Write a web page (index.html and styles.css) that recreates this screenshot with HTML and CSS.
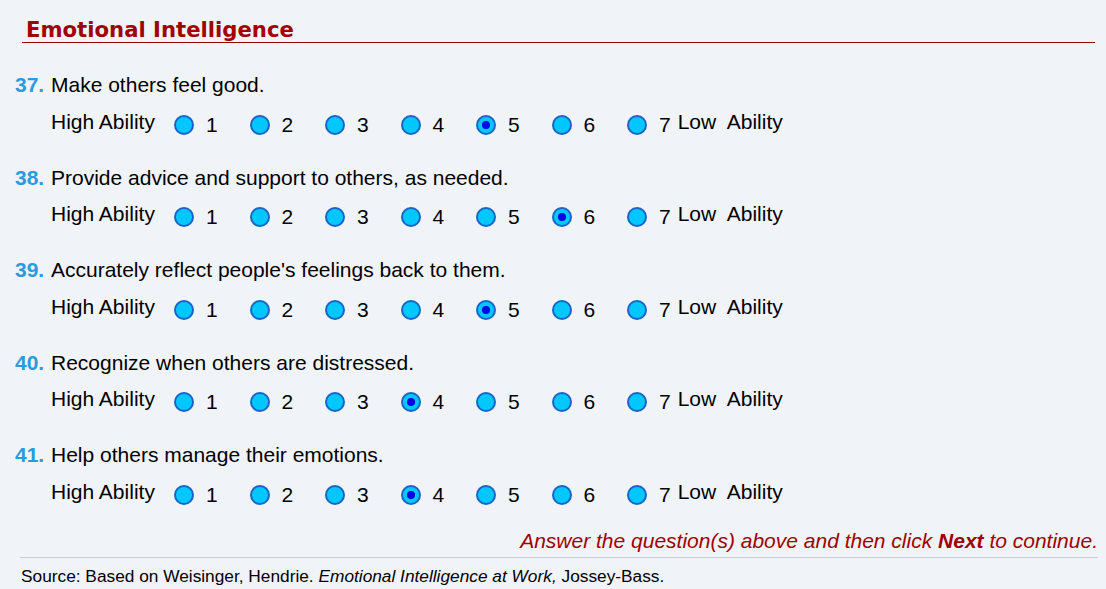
FILE: index.html
```html
<!DOCTYPE html>
<html lang="en">
<head>
  <meta charset="UTF-8">
  <title>Emotional Intelligence</title>
<link rel="stylesheet" href="styles.css">
</head>
<body>
  <div class="page">
    <h1 class="title">Emotional Intelligence</h1>

    <div class="questions" id="questions"></div>

    <p class="prompt">Answer the question(s) above and then click <b>Next</b> to continue.</p>
    <p class="source">Source: Based on Weisinger, Hendrie. <i>Emotional Intelligence at Work,</i> Jossey-Bass.</p>
  </div>

<script>
  const questions = [
    { num: 37, text: "Make others feel good.", answer: 5 },
    { num: 38, text: "Provide advice and support to others, as needed.", answer: 6 },
    { num: 39, text: "Accurately reflect people's feelings back to them.", answer: 5 },
    { num: 40, text: "Recognize when others are distressed.", answer: 4 },
    { num: 41, text: "Help others manage their emotions.", answer: 4 }
  ];

  const container = document.getElementById("questions");
  questions.forEach(q => {
    const item = document.createElement("div");
    item.className = "question";
    let options = "";
    for (let i = 1; i <= 7; i++) {
      options += `
        <label class="option">
          <span class="radio${i === q.answer ? " checked" : ""}"></span>
          <span class="value">${i}</span>
        </label>`;
    }
    item.innerHTML = `
      <div class="question-text"><span class="num">${q.num}.</span>${q.text}</div>
      <div class="scale">
        <span class="scale-label">High Ability</span>
        ${options}
        <span class="scale-label low">Low&nbsp; Ability</span>
      </div>
    `;
    container.appendChild(item);
  });
</script>
</body>
</html>
```

FILE: styles.css
```css
body {
  margin: 0;
  background-color: #f0f4f8;
  font-family: "Liberation Sans", Arial, sans-serif;
  color: #000;
}
.title {
  font-family: "DejaVu Sans", Verdana, sans-serif;
  font-size: 21.2px;
  font-weight: bold;
  color: #a00000;
  margin: 0 11px 0 22px;
  padding: 19px 0 2px 4px;
  line-height: 21px;
  border-bottom: 1px solid #a00000;
}
.questions {
  padding-top: 30px;
}
.question {
  margin-bottom: 29px;
  font-size: 21px;
}
.question-text {
  display: flex;
  line-height: 24px;
}
.num {
  width: 36px;
  padding-left: 15px;
  font-weight: bold;
  color: #2b9ade;
}
.scale {
  display: flex;
  align-items: flex-start;
  margin: 12.5px 0 0 51px;
  line-height: 24px;
}
.scale-label {
  width: 123px;
}
.scale-label.low {
  width: auto;
  margin-left: 7px;
}
.option {
  display: flex;
  align-items: flex-start;
  width: 75.5px;
}
.option:nth-last-child(2) {
  width: auto;
}
.radio {
  box-sizing: border-box;
  width: 20px;
  height: 20px;
  margin-top: 5px;
  border: 2px solid #1a64c8;
  border-radius: 50%;
  background-color: #00c8ff;
  display: flex;
  align-items: center;
  justify-content: center;
}
.radio.checked::after {
  content: "";
  width: 8px;
  height: 8px;
  border-radius: 50%;
  background-color: #0000e6;
}
.value {
  padding: 3px 0 0 12px;
}
.prompt {
  margin: -6.5px 8px 0 20px;
  text-align: right;
  font-size: 21px;
  line-height: 24px;
  font-style: italic;
  color: #a00000;
  padding-bottom: 4px;
  border-bottom: 1px solid #c4ccd4;
}
.source {
  margin: 0 0 0 21px;
  padding-top: 8px;
  font-size: 17.3px;
  line-height: 20px;
}
```
